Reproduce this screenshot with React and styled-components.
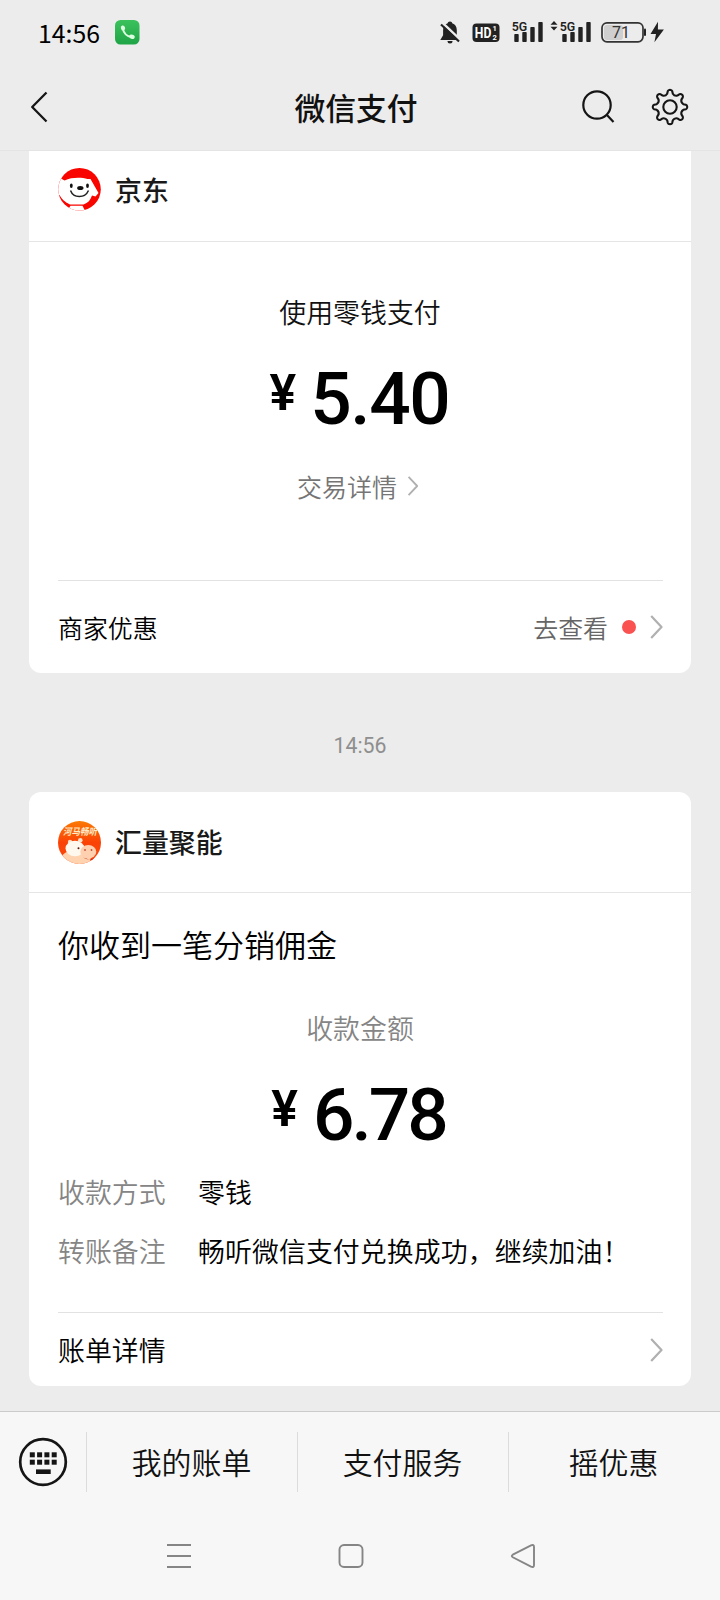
import React from "react";
import styled, { createGlobalStyle } from "styled-components";

const cjk = '"Noto Sans CJK SC", sans-serif';

const GlobalStyle = createGlobalStyle`
  *, *::before, *::after { box-sizing: border-box; }
  body { margin: 0; background: #ededed; font-family: ${cjk}; color: #191919; }
  svg { display: block; flex: none; }
`;

const Screen = styled.div`
  width: 720px;
  height: 1600px;
  display: flex;
  flex-direction: column;
  overflow: hidden;
  background: #ececec;
`;

const StatusBar = styled.div`
  height: 64px;
  flex: none;
  display: flex;
  align-items: center;
  padding: 0 55px 0 38px;
`;

const Clock = styled.span`
  width: 77px;
  font-size: 24.8px;
  font-weight: 400;
  line-height: 30px;
  color: #000;
  padding-bottom: 1px;
`;

const StatusIcons = styled.div`
  margin-left: auto;
`;

const NavBar = styled.header`
  height: 87px;
  flex: none;
  display: grid;
  grid-template-columns: 150px 1fr 150px;
  align-items: center;
  padding-bottom: 1px;
  border-bottom: 1px solid #e4e4e4;
`;

const BackButton = styled.div`
  padding-left: 30px;
`;

const PageTitle = styled.h1`
  margin: 0;
  padding-right: 8px;
  font-size: 30.8px;
  font-weight: 500;
  line-height: 40px;
  text-align: center;
  color: #111;
`;

const NavActions = styled.div`
  display: flex;
  align-items: center;
  justify-content: flex-end;
  gap: 36px;
  padding-right: 31px;
`;

const Feed = styled.main`
  flex: 1;
  min-height: 0;
  padding: 0 29px;
`;

const Card = styled.section`
  background: #fff;
  border-radius: ${(p) => (p.$clipped ? "0 0 12px 12px" : "12px")};
  height: ${(p) => p.$height}px;
  display: flex;
  flex-direction: column;
`;

const CardHeader = styled.div`
  height: ${(p) => p.$height}px;
  flex: none;
  display: flex;
  align-items: center;
  gap: 14px;
  padding: 0 29px ${(p) => p.$lift}px;
  border-bottom: 1px solid #e5e5e5;
`;

const Merchant = styled.span`
  font-size: 26.9px;
  font-weight: 500;
  line-height: 36px;
`;

const CardBody = styled.div`
  flex: 1;
  padding: ${(p) => p.$top}px 29px 0;
`;

const Caption = styled.div`
  font-size: 26.9px;
  font-weight: 350;
  line-height: 40px;
  text-align: center;
  color: ${(p) => (p.$muted ? "#858585" : "#111")};
`;

const Amount = styled.div`
  display: flex;
  justify-content: center;
  align-items: flex-start;
  gap: ${(p) => p.$gap}px;
  margin-top: 31px;
  padding-right: ${(p) => p.$shift}px;
  font-family: Roboto, sans-serif;
  font-weight: 500;
  letter-spacing: ${(p) => p.$tracking}px;
  color: #000;
`;

const Currency = styled.span`
  padding-top: 3px;
  font-size: 50px;
  font-weight: 600;
  line-height: 54px;
  letter-spacing: 0;
`;

const Figure = styled.span`
  font-size: 73px;
  line-height: 73px;
`;

const DetailLink = styled.div`
  display: flex;
  justify-content: center;
  align-items: center;
  gap: 10px;
  margin-top: 32px;
  padding-right: 4px;
  font-size: 25px;
  font-weight: 350;
  line-height: 36px;
  color: #757575;
`;

const CardFooter = styled.div`
  height: ${(p) => p.$height}px;
  flex: none;
  display: flex;
  align-items: center;
  justify-content: space-between;
  margin: 0 28px 0 29px;
  border-top: 1px solid #e2e2e2;
  font-size: ${(p) => p.$size}px;
  font-weight: 350;
  line-height: 36px;
  color: #000;
`;

const FooterAction = styled.span`
  display: flex;
  align-items: center;
  color: #666;
`;

const Dot = styled.i`
  width: 14px;
  height: 14px;
  margin: 0 14px;
  border-radius: 50%;
  background: #fa5151;
`;

const Timestamp = styled.div`
  height: 119px;
  padding-top: 57px;
  font-family: Roboto, sans-serif;
  font-size: 21.3px;
  line-height: 32px;
  text-align: center;
  color: #8f8f8f;
`;

const Headline = styled.div`
  margin-bottom: 42px;
  font-size: 31px;
  font-weight: 350;
  line-height: 44px;
  color: #000;
`;

const Fields = styled.dl`
  display: grid;
  grid-template-columns: 140px 1fr;
  row-gap: 19px;
  margin: 20px 0 0;
  font-size: 26.9px;
  font-weight: 350;
  line-height: 40px;
`;

const FieldName = styled.dt`
  color: #858585;
`;

const FieldValue = styled.dd`
  margin: 0;
  letter-spacing: 0.08px;
  color: #000;
  white-space: nowrap;
`;

const MenuBar = styled.nav`
  height: 101px;
  flex: none;
  display: flex;
  align-items: center;
  border-top: 1px solid #cbcbcb;
  background: #f7f7f7;
`;

const KeyboardButton = styled.div`
  width: 86px;
  padding-left: 18px;
`;

const MenuItem = styled.div`
  width: 211px;
  height: 60px;
  padding-right: 1px;
  border-left: 1px solid #dcdcdc;
  font-size: 29.9px;
  font-weight: 350;
  line-height: 59px;
  text-align: center;
  color: #111;
`;

const SystemNav = styled.div`
  height: 88px;
  flex: none;
  display: flex;
  justify-content: center;
  gap: 146px;
  padding: 30px 18px 0 0;
  background: #f7f7f7;
`;

const PhoneBadge = () => (
  <svg width="25" height="25" viewBox="0 0 25 25">
    <defs>
      <linearGradient id="phone" x1="0" y1="0" x2="0" y2="1">
        <stop offset="0" stopColor="#3cc25c" />
        <stop offset="1" stopColor="#1fa446" />
      </linearGradient>
    </defs>
    <rect width="24.5" height="24.5" rx="5.5" fill="url(#phone)" />
    <path d="M7.800 8.500C8.600 13 12 16.500 16.500 17" fill="none" stroke="#ddffe0" strokeWidth="1.900" />
    <ellipse cx="8" cy="8" rx="2.100" ry="2.600" fill="#ddffe0" transform="rotate(-20 8 8)" />
    <ellipse cx="17" cy="16.800" rx="2.800" ry="2.100" fill="#ddffe0" transform="rotate(20 17 16.800)" />
  </svg>
);

const bars = [
  [0, 13],
  [8, 11],
  [16, 6],
  [24, 1],
];

const Signal = ({ x }) => (
  <g transform={`translate(${x} 21)`}>
    {bars.map(([bx, by]) => (
      <rect key={bx} x={bx} y={by} width="4.400" height={21 - by} rx="0.800" />
    ))}
    <text x="-2.500" y="10" fontSize="13.500" fontWeight="600" fontFamily="Roboto, sans-serif" textLength="15.500" lengthAdjust="spacingAndGlyphs">
      5G
    </text>
  </g>
);

const StatusGlyphs = () => (
  <svg width="227" height="64" viewBox="438 0 227 64" fill="#222">
    <path d="M450 21.500c1.500 0 2 .8 2.200 1.800 3 1 4.600 3.600 4.600 7v5l2.200 4.600h-18.700l2.800-4.600v-5c0-3.400 1.600-6 4.600-7 .2-1 .8-1.800 2.300-1.800z" />
    <path d="M447.500 41h5a2.500 2.500 0 0 1-5 0z" />
    <path d="M442 22.500l18.500 17.500" stroke="#ececec" strokeWidth="2.500" />
    <path d="M441 24.500l18 17" stroke="#222" strokeWidth="2.200" />
    <rect x="472.500" y="23.500" width="27" height="18.500" rx="4" />
    <g fill="#fff" fontFamily="Roboto, sans-serif" fontWeight="700">
      <text x="474.800" y="38" fontSize="15" textLength="16.500" lengthAdjust="spacingAndGlyphs">HD</text>
      <text x="492.500" y="31.200" fontSize="7.500">1</text>
      <text x="492.500" y="40.400" fontSize="7.500">2</text>
    </g>
    <Signal x={514.3} />
    <path d="M554 21l3.500 3.800h-7zM554 30.500l3.500-3.800h-7z" />
    <Signal x={562.3} />
    <rect x="604" y="25" width="19" height="15" rx="3" fill="#cfcfcf" />
    <rect x="602" y="22.800" width="41" height="19" rx="5" fill="none" stroke="#333" strokeWidth="1.700" />
    <rect x="644" y="28.500" width="2" height="7.500" rx="1" />
    <text x="612" y="38.300" fontSize="16" fontFamily="Roboto, sans-serif" textLength="18" fill="#333">71</text>
    <path d="M658 21.800l-7.500 12.200h5.500l-1.600 8.200 9.500-12.700h-6z" />
  </svg>
);

const BackIcon = () => (
  <svg width="20" height="32" viewBox="0 0 20 32" fill="none" stroke="#151515" strokeWidth="2.300">
    <path d="M16.500 1.500L2.200 16l14.300 14.500" strokeLinejoin="round" />
  </svg>
);

const SearchIcon = () => (
  <svg width="33" height="34" viewBox="0 0 33 34" fill="none" stroke="#151515" strokeWidth="2.200">
    <circle cx="15" cy="15" r="13.700" />
    <path d="M24.500 24.500l7 7.500" />
  </svg>
);

const gearPath = (() => {
  const parts = [];
  const pt = (r, deg) => {
    const a = ((deg - 90) * Math.PI) / 180;
    return `${(19 + r * Math.cos(a)).toFixed(2)} ${(19 + r * Math.sin(a)).toFixed(2)}`;
  };
  for (let i = 0; i < 8; i += 1) {
    const c = i * 45;
    parts.push(`${i ? "L" : "M"}${pt(13.6, c - 12)}`);
    parts.push(`L${pt(16, c - 8)}Q${pt(17.2, c - 6)} ${pt(17.3, c)}Q${pt(17.2, c + 6)} ${pt(16, c + 8)}`);
    parts.push(`L${pt(13.6, c + 12)}Q${pt(11.6, c + 22.5)} ${pt(13.6, c + 33)}`);
  }
  return `${parts.join("")}Z`;
})();

const GearIcon = () => (
  <svg width="38" height="38" viewBox="0 0 38 38" fill="none" stroke="#151515" strokeWidth="2.100" strokeLinejoin="round">
    <path d={gearPath} />
    <circle cx="19" cy="19" r="6.700" />
  </svg>
);

const Chevron = ({ w = 13, h = 24 }) => (
  <svg width={w} height={h} viewBox="0 0 13 24" fill="none" stroke="#b0b0b0" strokeWidth="2.200">
    <path d="M1.200 1l10.300 11L1.200 23" strokeLinejoin="round" />
  </svg>
);

const DogAvatar = () => (
  <svg width="43" height="43" viewBox="0 0 43 43">
    <defs>
      <clipPath id="dog">
        <circle cx="21.500" cy="21.300" r="21.300" />
      </clipPath>
    </defs>
    <g clipPath="url(#dog)">
      <rect width="43" height="43" fill="#f90500" />
      <path
        d="M-1 11L3 10.500 6.500 12.500C14 9 24 9.500 29.500 11L32.500 11 40.500 25 37.500 28.500 34 27.500C32.500 32 30 35 25.500 36.500H12C6.500 34 3.500 31 1.500 27L-1 26z"
        fill="#fff"
      />
      <path d="M12.500 37.800h12l3.500 7H8z" fill="#fff" />
    </g>
    <ellipse cx="13.300" cy="17.800" rx="1.400" ry="2.300" fill="#111" />
    <ellipse cx="29.500" cy="17.800" rx="1.400" ry="2.300" fill="#111" />
    <ellipse cx="22.300" cy="20" rx="3.200" ry="2" fill="#111" />
    <path d="M12.500 22.500C15.500 30.500 27 30.500 30.500 22.500" fill="none" stroke="#222" strokeWidth="1.500" />
  </svg>
);

const HippoAvatar = () => (
  <svg width="43" height="43" viewBox="0 0 43 43">
    <defs>
      <linearGradient id="sunset" x1="0" y1="0" x2="0" y2="1">
        <stop offset="0" stopColor="#fb7a05" />
        <stop offset="0.500" stopColor="#fa4206" />
        <stop offset="1" stopColor="#fb4a10" />
      </linearGradient>
      <clipPath id="hippo">
        <circle cx="21.500" cy="21.500" r="21.500" />
      </clipPath>
    </defs>
    <g clipPath="url(#hippo)">
      <rect width="43" height="43" fill="url(#sunset)" />
      <path d="M4 36C6 28 26 27 33 38L29 44H8z" fill="#ffd3b0" />
      <circle cx="12" cy="21" r="2.200" fill="#ffe0c8" />
      <circle cx="22.300" cy="19.300" r="2.300" fill="#ffe0c8" />
      <ellipse cx="17" cy="27.500" rx="9.500" ry="7.800" fill="#fff8ef" />
      <ellipse cx="30.300" cy="30.800" rx="8" ry="6.800" fill="#ffd0b0" />
      <path d="M25 36.500c4 2.500 8 2.500 11.500.5l-2 2.500z" fill="#c92a1a" />
      <circle cx="20.500" cy="27.300" r="1" fill="#5a1a10" />
      <circle cx="27" cy="29" r="0.900" fill="#c94a30" />
      <circle cx="33.500" cy="29" r="0.900" fill="#c94a30" />
      <text
        x="5"
        y="13.600"
        fontSize="9.500"
        fontWeight="700"
        fontStyle="italic"
        fill="#ffeac8"
        textLength="34"
        lengthAdjust="spacingAndGlyphs"
      >
        河马畅听
      </text>
    </g>
  </svg>
);

const KeyboardIcon = () => (
  <svg width="50" height="50" viewBox="0 0 50 50" fill="#151515">
    <circle cx="25" cy="25" r="22.800" fill="none" stroke="#151515" strokeWidth="2.700" />
    {[0, 1, 2, 3].map((i) => (
      <React.Fragment key={i}>
        <rect x={11.8 + i * 7.3} y="15.300" width="5" height="5" />
        <rect x={11.8 + i * 7.3} y="22.700" width="5" height="5" />
      </React.Fragment>
    ))}
    <rect x="18" y="32.400" width="14.700" height="4.600" />
  </svg>
);

const MenuIcon = () => (
  <svg width="26" height="28" viewBox="0 0 26 28" stroke="#858585" strokeWidth="2">
    <path d="M1 3h24M1 14h24M1 25h24" />
  </svg>
);

const HomeIcon = () => (
  <svg width="26" height="28" viewBox="0 0 26 28" fill="none" stroke="#858585" strokeWidth="1.900">
    <rect x="1.500" y="3" width="23" height="22" rx="4.500" />
  </svg>
);

const ReturnIcon = () => (
  <svg width="26" height="28" viewBox="0 0 26 28" fill="none" stroke="#858585" strokeWidth="1.900">
    <path d="M2.800 12.700L21 3.300Q24 2.200 24 5v18Q24 25.800 21 24.700L2.800 15.300Q.8 14 2.800 12.700z" />
  </svg>
);

export default function App() {
  return (
    <Screen>
      <GlobalStyle />
      <StatusBar>
        <Clock>14:56</Clock>
        <PhoneBadge />
        <StatusIcons>
          <StatusGlyphs />
        </StatusIcons>
      </StatusBar>
      <NavBar>
        <BackButton>
          <BackIcon />
        </BackButton>
        <PageTitle>微信支付</PageTitle>
        <NavActions>
          <SearchIcon />
          <GearIcon />
        </NavActions>
      </NavBar>

      <Feed>
        <Card $clipped $height={522}>
          <CardHeader $height={91} $lift={13}>
            <DogAvatar />
            <Merchant>京东</Merchant>
          </CardHeader>
          <CardBody $top={50}>
            <Caption>使用零钱支付</Caption>
            <Amount $gap={14} $tracking={-1.4} $shift={1}>
              <Currency>¥</Currency>
              <Figure>5.40</Figure>
            </Amount>
            <DetailLink>
              交易详情
              <Chevron w={12} h={20} />
            </DetailLink>
          </CardBody>
          <CardFooter $height={93} $size={24.9}>
            商家优惠
            <FooterAction>
              去查看
              <Dot />
              <Chevron />
            </FooterAction>
          </CardFooter>
        </Card>

        <Timestamp>14:56</Timestamp>

        <Card $height={594}>
          <CardHeader $height={101} $lift={0}>
            <HippoAvatar />
            <Merchant>汇量聚能</Merchant>
          </CardHeader>
          <CardBody $top={29}>
            <Headline>你收到一笔分销佣金</Headline>
            <Caption $muted>收款金额</Caption>
            <Amount $gap={15} $tracking={-3} $shift={3}>
              <Currency>¥</Currency>
              <Figure>6.78</Figure>
            </Amount>
            <Fields>
              <FieldName>收款方式</FieldName>
              <FieldValue>零钱</FieldValue>
              <FieldName>转账备注</FieldName>
              <FieldValue>畅听微信支付兑换成功，继续加油！</FieldValue>
            </Fields>
          </CardBody>
          <CardFooter $height={74} $size={26.9}>
            账单详情
            <Chevron />
          </CardFooter>
        </Card>
      </Feed>

      <MenuBar>
        <KeyboardButton>
          <KeyboardIcon />
        </KeyboardButton>
        <MenuItem>我的账单</MenuItem>
        <MenuItem>支付服务</MenuItem>
        <MenuItem>摇优惠</MenuItem>
      </MenuBar>
      <SystemNav>
        <MenuIcon />
        <HomeIcon />
        <ReturnIcon />
      </SystemNav>
    </Screen>
  );
}
